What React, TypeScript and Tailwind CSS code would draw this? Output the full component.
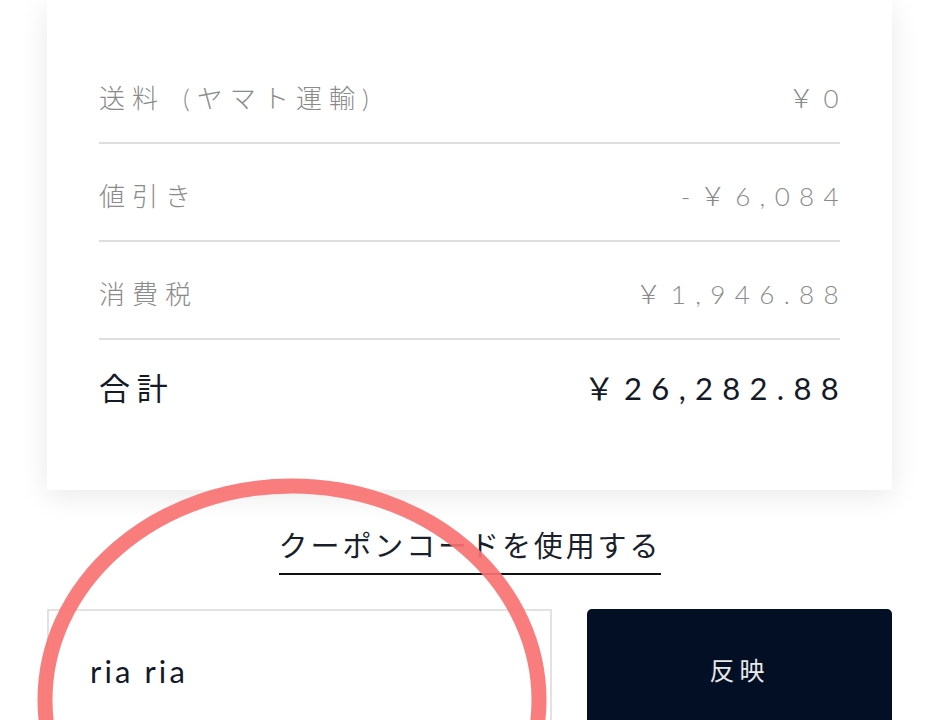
import React from 'react';

const rows = [
  { label: '送料 (ヤマト運輸)', value: '￥0' },
  { label: '値引き', value: '-￥6,084' },
  { label: '消費税', value: '￥1,946.88' },
];

const font = 'font-["Lato","Noto_Sans_CJK_JP",sans-serif]';

const App: React.FC = () => {
  return (
    <div className={`relative min-h-[720px] overflow-hidden bg-white ${font}`}>
      {/* Summary card */}
      <div className="ml-[47px] mr-[48px] bg-white shadow-[0_6px_28px_rgba(0,0,0,0.09)] px-[52px] pt-[46px] pb-[82px]">
        {rows.map((r) => (
          <div
            key={r.label}
            className="flex items-center justify-between border-b-2 border-[#dedede] pt-[32px] pb-[24px] text-[26px] leading-[40px] font-light text-[#8a8a8a]"
          >
            <span className="tracking-[0.27em] [word-spacing:4px]">{r.label}</span>
            <span className="tracking-[0.36em] mr-[-8px]">{r.value}</span>
          </div>
        ))}
        <div className="flex items-center justify-between pt-[28px] text-[31px] leading-[40px] text-[#141a26]">
          <span className="tracking-[0.22em]">合計</span>
          <span className="tracking-[0.3em] mr-[-8px]">￥26,282.88</span>
        </div>
      </div>

      {/* Coupon link */}
      <div className="mt-[36px] flex justify-center">
        <span className="border-b-2 border-[#111] pb-[7px] text-[29px] leading-[40px] tracking-[0.1em] text-[#1a1f2b]">
          クーポンコードを使用する
        </span>
      </div>

      {/* Coupon input */}
      <div className="mt-[34px] ml-[47px] mr-[48px] flex gap-[35px]">
        <div className="flex h-[126px] flex-1 items-center border-2 border-[#e2e2e2] pl-[41px] pb-[2px]">
          <span className="text-[31px] tracking-[0.1em] text-[#111827]">ria ria</span>
        </div>
        <button className="flex h-[126px] w-[305px] items-center justify-center rounded-[5px] bg-[#020f24] pb-[2px] text-[25px] tracking-[0.2em] text-[#e8e8e8]">
          反映
        </button>
      </div>

      {/* Red annotation ring */}
      <svg
        className="pointer-events-none absolute left-0 top-0"
        width="940"
        height="720"
        viewBox="0 0 940 720"
      >
        <ellipse
          cx="292"
          cy="700"
          rx="247"
          ry="214"
          fill="none"
          stroke="#f87272"
          strokeOpacity="0.92"
          strokeWidth="15"
        />
      </svg>
    </div>
  );
};

export default App;
